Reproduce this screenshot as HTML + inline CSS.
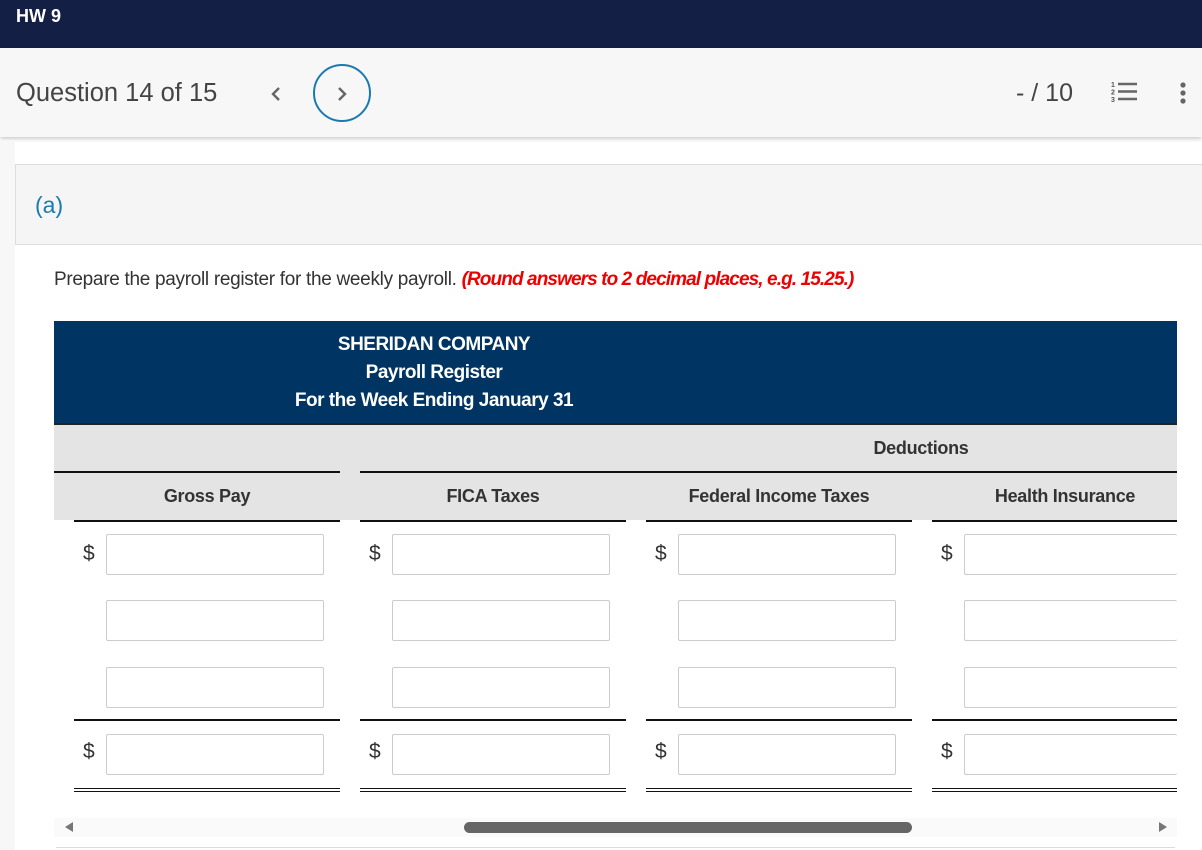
<!DOCTYPE html>
<html><head><style>
*{margin:0;padding:0;box-sizing:border-box}
body{width:1202px;height:850px;overflow:hidden;background:#fff;font-family:"Liberation Sans",sans-serif;position:relative}
.a{position:absolute}
.top{left:0;top:0;width:1202px;height:48px;background:#141f45;color:#fff;font-size:18px;font-weight:bold;padding:6px 0 0 16px}
.nav{left:0;top:48px;width:1202px;height:89px;background:#f7f7f7;box-shadow:0 2px 4px rgba(0,0,0,.2)}
.inp{position:absolute;width:218px;height:41px;border:1px solid #ccc;border-radius:2px;background:#fff}
.dol{position:absolute;font-size:21px;color:#333}
.hl{position:absolute;height:2px;background:#111}
.th{position:absolute;font-size:18px;font-weight:bold;color:#333;text-align:center;width:266px;letter-spacing:-0.3px}
</style></head><body>
<div class="a top">HW 9</div>
<div class="a nav">
 <div class="a" style="left:16px;top:31px;font-size:25.5px;color:#444">Question 14 of 15</div>
 <svg class="a" style="left:270px;top:38px" width="12" height="16"><path d="M9 2 L3 8 L9 14" fill="none" stroke="#666" stroke-width="2.4"/></svg>
 <div class="a" style="left:313px;top:16px;width:58px;height:58px;border:2px solid #1a7ab0;border-radius:50%"></div>
 <svg class="a" style="left:336px;top:38px" width="12" height="16"><path d="M3 2 L9 8 L3 14" fill="none" stroke="#666" stroke-width="2.4"/></svg>
 <div class="a" style="left:1016px;top:31px;font-size:25px;color:#444">- / 10</div>
 <svg class="a" style="left:1111px;top:33px" width="28" height="22"><g fill="#555" font-size="7" font-weight="bold" font-family="Liberation Sans"><text x="0" y="6">1</text><text x="0" y="13.5">2</text><text x="0" y="21">3</text></g><g stroke="#666" stroke-width="2.5"><line x1="7" y1="3" x2="26" y2="3"/><line x1="7" y1="10.5" x2="26" y2="10.5"/><line x1="7" y1="18" x2="26" y2="18"/></g></svg>
 <svg class="a" style="left:1179px;top:33px" width="8" height="24"><circle cx="4" cy="4" r="2.6" fill="#666"/><circle cx="4" cy="12" r="2.6" fill="#666"/><circle cx="4" cy="20" r="2.6" fill="#666"/></svg>
</div>
<div class="a" style="left:0;top:140px;width:15px;height:710px;background:#f7f7f7"></div>
<div class="a" style="left:15px;top:164px;width:1187px;height:81px;background:#f5f5f5;border:1px solid #ddd;border-right:none"></div>
<div class="a" style="left:35px;top:192px;font-size:23px;color:#1a7ab0">(a)</div>
<div class="a" style="left:54px;top:269px;font-size:19px;color:#333;letter-spacing:-0.3px">Prepare the payroll register for the weekly payroll. <b style="color:#e00;font-style:italic;letter-spacing:-0.9px">(Round answers to 2 decimal places, e.g. 15.25.)</b></div>
<div class="a" style="left:54px;top:321px;width:1123px;height:104px;background:#003462"></div>
<div class="a" style="left:54px;top:331px;width:760px;text-align:center;color:#fff;font-weight:bold;font-size:19px;line-height:28px;letter-spacing:-0.5px">SHERIDAN COMPANY<br>Payroll Register<br>For the Week Ending January 31</div>
<div class="a" style="left:54px;top:425px;width:1123px;height:95px;background:#e4e4e4"></div>
<div class="hl" style="left:54px;top:423px;width:1123px;background:#222"></div>
<div class="hl" style="left:54px;top:471px;width:286px"></div>
<div class="hl" style="left:360px;top:471px;width:817px"></div>
<div class="th" style="left:788px;top:438px;">Deductions</div>
<div class="th" style="left:74px;top:486px">Gross Pay</div>
<div class="th" style="left:360px;top:486px">FICA Taxes</div>
<div class="th" style="left:646px;top:486px">Federal Income Taxes</div>
<div class="th" style="left:932px;top:486px">Health Insurance</div>
<div class="a" style="left:54px;top:520px;width:1123px;height:300px;background:#fff"></div>

<div class="hl" style="left:74px;top:520px;width:266px"></div>
<div class="hl" style="left:360px;top:520px;width:266px"></div>
<div class="hl" style="left:646px;top:520px;width:266px"></div>
<div class="hl" style="left:932px;top:520px;width:245px"></div>

<div class="dol" style="left:83px;top:542px">$</div><div class="dol" style="left:369px;top:542px">$</div><div class="dol" style="left:655px;top:542px">$</div><div class="dol" style="left:941px;top:542px">$</div>
<div class="dol" style="left:83px;top:740px">$</div><div class="dol" style="left:369px;top:740px">$</div><div class="dol" style="left:655px;top:740px">$</div><div class="dol" style="left:941px;top:740px">$</div>

<div class="inp" style="left:106px;top:534px"></div><div class="inp" style="left:392px;top:534px"></div><div class="inp" style="left:678px;top:534px"></div><div class="inp" style="left:964px;top:534px;width:213px;border-right:none"></div>
<div class="inp" style="left:106px;top:600px"></div><div class="inp" style="left:392px;top:600px"></div><div class="inp" style="left:678px;top:600px"></div><div class="inp" style="left:964px;top:600px;width:213px;border-right:none"></div>
<div class="inp" style="left:106px;top:667px"></div><div class="inp" style="left:392px;top:667px"></div><div class="inp" style="left:678px;top:667px"></div><div class="inp" style="left:964px;top:667px;width:213px;border-right:none"></div>
<div class="inp" style="left:106px;top:734px"></div><div class="inp" style="left:392px;top:734px"></div><div class="inp" style="left:678px;top:734px"></div><div class="inp" style="left:964px;top:734px;width:213px;border-right:none"></div>

<div class="hl" style="left:74px;top:719px;width:266px"></div><div class="hl" style="left:360px;top:719px;width:266px"></div><div class="hl" style="left:646px;top:719px;width:266px"></div><div class="hl" style="left:932px;top:719px;width:245px"></div>
<div class="a" style="left:74px;top:788px;width:266px;height:4px;border-top:1.5px solid #111;border-bottom:1.5px solid #111"></div>
<div class="a" style="left:360px;top:788px;width:266px;height:4px;border-top:1.5px solid #111;border-bottom:1.5px solid #111"></div>
<div class="a" style="left:646px;top:788px;width:266px;height:4px;border-top:1.5px solid #111;border-bottom:1.5px solid #111"></div>
<div class="a" style="left:932px;top:788px;width:245px;height:4px;border-top:1.5px solid #111;border-bottom:1.5px solid #111"></div>

<div class="a" style="left:54px;top:818px;width:1123px;height:19px;background:#fafafa"></div>
<div class="a" style="left:464px;top:822px;width:448px;height:11px;background:#666;border-radius:6px"></div>
<div class="a" style="left:65px;top:822px;width:0;height:0;border-top:5px solid transparent;border-bottom:5px solid transparent;border-right:8px solid #777"></div>
<div class="a" style="left:1159px;top:822px;width:0;height:0;border-top:5px solid transparent;border-bottom:5px solid transparent;border-left:8px solid #777"></div>
<div class="a" style="left:56px;top:847px;width:1119px;height:1px;background:#ddd"></div>
</body></html>
